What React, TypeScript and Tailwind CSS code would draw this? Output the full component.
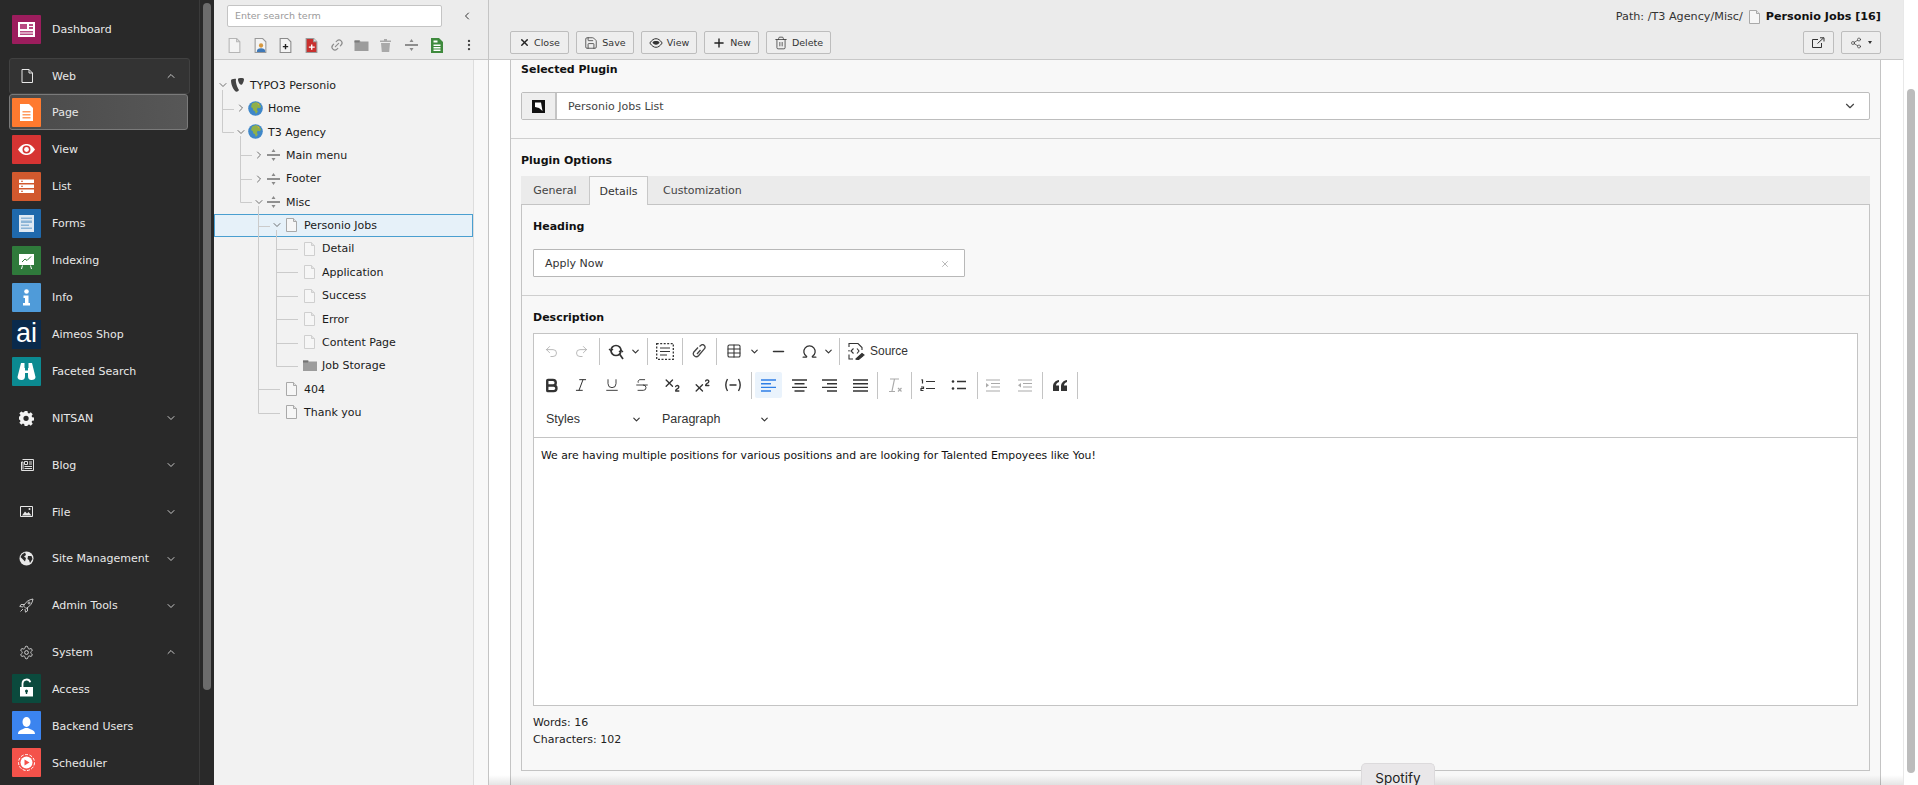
import { ReactNode } from "react";
import {
  Bold,
  ChevronDown,
  ChevronLeft,
  ChevronRight,
  ChevronUp,
  Italic,
  Link2,
  Minus,
  MoreVertical,
  Omega,
  Plus,
  Redo2,
  Save,
  Share2,
  Strikethrough,
  Subscript,
  Superscript,
  Table,
  Trash2,
  Underline,
  Undo2,
  X,
} from "lucide-react";

function Doc({ light }: { light?: boolean }) {
  const line = light ? "#cfcfcf" : "#a9a9a9";
  return (
    <svg width="11" height="14" viewBox="0 0 11 14" className="shrink-0">
      <path d="M.5.5h7l3 3v10H.5z" fill="#f6f6f6" stroke={line} />
      <path d="M7.5.5v3h3" fill="#e2e2e2" stroke={line} />
    </svg>
  );
}

function Divider() {
  return (
    <svg width="13" height="12" viewBox="0 0 13 12" className="shrink-0">
      <path d="M0 6h13" stroke="#666" strokeWidth="1.4" />
      <path d="M6.5 0l2 3h-4zM6.5 12l2-3h-4z" fill="#8a8a8a" />
    </svg>
  );
}

function Folder() {
  return (
    <svg width="14" height="11" viewBox="0 0 14 11" className="shrink-0">
      <path d="M0 0h5l1 1.5h8V11H0z" fill="#9c9c9c" />
      <path d="M0 1h5v1.5H0z" fill="#737373" />
    </svg>
  );
}

function Globe() {
  return (
    <svg width="15" height="15" viewBox="0 0 15 15" className="shrink-0">
      <circle cx="7.5" cy="7.5" r="7.3" fill="#3f87c9" />
      <path d="M4 2.5l4-1.4 3 1.2 2 3-1 2-2.5-.5-.6 2.2 1 1.6-2 2.4-1-2.7-1.7-1-.4-2-1.800-1.300z" fill="#8fb04a" />
      <path d="M9 2l2.500 1-1 1.500z" fill="#d4a63f" />
    </svg>
  );
}

function Typo3Logo() {
  return (
    <svg width="15" height="14" viewBox="0 0 15 14" className="shrink-0">
      <path d="M1 2.500C1 1.400 2.500.700 5 .700c.500 0 .900.100 1 .300C5.200 4 7.500 10 9 12c-.700.900-1.400 1.700-2.300 1.700C4 13.700 1 7 1 2.500z" fill="#444" />
      <path d="M8 .800c-.300 2.200 1.500 6 3 6 1.700 0 3-4.300 3-5.400C14 .300 12.800 0 11 0 9.500 0 8.300.200 8 .800z" fill="#444" />
    </svg>
  );
}

type TreeRow = {
  label: string;
  depth: number;
  icon: ReactNode;
  toggle?: "open" | "closed";
  selected?: boolean;
};

const treeRows: TreeRow[] = [
  { label: "TYPO3 Personio", depth: 0, icon: <Typo3Logo />, toggle: "open" },
  { label: "Home", depth: 1, icon: <Globe />, toggle: "closed" },
  { label: "T3 Agency", depth: 1, icon: <Globe />, toggle: "open" },
  { label: "Main menu", depth: 2, icon: <Divider />, toggle: "closed" },
  { label: "Footer", depth: 2, icon: <Divider />, toggle: "closed" },
  { label: "Misc", depth: 2, icon: <Divider />, toggle: "open" },
  { label: "Personio Jobs", depth: 3, icon: <Doc />, toggle: "open", selected: true },
  { label: "Detail", depth: 4, icon: <Doc light /> },
  { label: "Application", depth: 4, icon: <Doc light /> },
  { label: "Success", depth: 4, icon: <Doc light /> },
  { label: "Error", depth: 4, icon: <Doc light /> },
  { label: "Content Page", depth: 4, icon: <Doc light /> },
  { label: "Job Storage", depth: 4, icon: <Folder /> },
  { label: "404", depth: 3, icon: <Doc /> },
  { label: "Thank you", depth: 3, icon: <Doc /> },
];

function ModuleTile({ bg, children }: { bg: string; children: ReactNode }) {
  return (
    <span className={`flex h-[29px] w-[29px] shrink-0 items-center justify-center rounded-[1px] ${bg}`}>
      <svg width="29" height="29" viewBox="0 0 29 29" fill="#fff">
        {children}
      </svg>
    </span>
  );
}

function ModuleRow({ label, tile, active }: { label: string; tile: ReactNode; active?: boolean }) {
  return (
    <div className="relative flex h-[37px] items-center pl-[12px]">
      {active && (
        <div className="absolute left-[9px] top-0 h-[36px] w-[179px] rounded-[3px] border border-[#7a7a7a] bg-gradient-to-r from-[#4a4a4a] to-[#575757]" />
      )}
      <span className="relative">{tile}</span>
      <span className="relative ml-[11px] pt-[2px] text-[#e8e8e8]">{label}</span>
    </div>
  );
}

function GroupRow({ label, icon, open, boxed }: { label: string; icon: ReactNode; open?: boolean; boxed?: boolean }) {
  return (
    <div
      className={
        boxed
          ? "mx-[9px] mt-[14px] flex h-[36px] items-center rounded-[3px] border border-[#414141] bg-[#333333] pl-[2px]"
          : "mx-[9px] mt-[10.9px] flex h-[36px] items-center border border-transparent pl-[2px]"
      }
    >
      <span className="flex h-[29px] w-[29px] items-center justify-center">{icon}</span>
      <span className="ml-[11px] pt-[2px] text-[#e8e8e8]">{label}</span>
      <span className="ml-auto mr-[12px] text-[#c8c8c8]">
        {open ? <ChevronUp size={12} /> : <ChevronDown size={12} />}
      </span>
    </div>
  );
}

function Sidebar() {
  return (
    <aside className="flex h-full w-[214px] shrink-0 bg-[#292929] text-[11px]">
      <nav className="w-[199px] pt-[15px]">
        <div className="flex h-[29px] items-center pl-[12px]">
          <ModuleTile bg="bg-[#9c1d5d]">
            <path d="M6 7h17v15H6z" />
            <path d="M8 9h7v5H8zM17 9h4v2h-4zM17 12h4v2h-4zM8 16h13v1.500H8zM8 18.500h13V20H8z" fill="#b84a82" />
          </ModuleTile>
          <span className="ml-[11px] pt-[2px] text-[#e8e8e8]">Dashboard</span>
        </div>
        <GroupRow
          boxed
          open
          label="Web"
          icon={
            <svg width="12" height="14" viewBox="0 0 12 14" fill="none" stroke="#e8e8e8">
              <path d="M1 .500h7l3.500 3.500v9.500H1zM8 .500V4h3.500" />
            </svg>
          }
        />
        <ModuleRow
          active
          label="Page"
          tile={
            <ModuleTile bg="bg-[#ff7a2f]">
              <path d="M8 6h9l4 4v13H8z" />
              <path d="M10.500 13h8v1.600h-8zM10.500 16h8v1.600h-8zM10.500 19h8v1.600h-8z" fill="#ff9a60" />
            </ModuleTile>
          }
        />
        <ModuleRow
          label="View"
          tile={
            <ModuleTile bg="bg-[#d63433]">
              <path fillRule="evenodd" d="M6 14.500C9 10 12 9 14.500 9s5.500 1 8.500 5.500C20 19 17 20 14.500 20S9 19 6 14.500zm8.500-4a4 4 0 100 8 4 4 0 000-8z" />
              <circle cx="14.500" cy="14.500" r="2.400" />
            </ModuleTile>
          }
        />
        <ModuleRow
          label="List"
          tile={
            <ModuleTile bg="bg-[#d1592e]">
              <path d="M7 7.500h15v3.500H7zM7 12.500h15V16H7zM7 17.500h15V21H7z" />
              <path d="M9 8.700h2v1H9zM9 13.700h2v1H9zM9 18.700h2v1H9z" fill="#d1592e" />
            </ModuleTile>
          }
        />
        <ModuleRow
          label="Forms"
          tile={
            <ModuleTile bg="bg-[#1f69ac]">
              <path d="M7 6h15v17H7z" fill="#dfe9f3" />
              <path d="M9 8.500h11v1.500H9zM9 11.500h11V14H9zM9 15.500h8V17H9zM9 18.500h11V20H9z" fill="#8cb4d6" />
            </ModuleTile>
          }
        />
        <ModuleRow
          label="Indexing"
          tile={
            <ModuleTile bg="bg-[#2f7a3b]">
              <path d="M7 8h15v11H7zM10 19.500h1L10 23H9zM18 19.500h1l1 3.500h-1z" />
              <path d="M10 16l3-3 2 1.500 4-4" fill="none" stroke="#2f7a3b" strokeWidth="1" />
            </ModuleTile>
          }
        />
        <ModuleRow
          label="Info"
          tile={
            <ModuleTile bg="bg-[#4f9bd9]">
              <circle cx="14.500" cy="8.500" r="2.300" />
              <path d="M11.500 12.500h5V20h1.500v2.500h-7V20H13v-5h-1.500z" />
            </ModuleTile>
          }
        />
        <ModuleRow
          label="Aimeos Shop"
          tile={
            <span className="flex h-[29px] w-[29px] items-center justify-center bg-[#0a2a4c] pb-[3px] font-['Liberation_Sans',sans-serif] text-[27px] leading-none text-white">
              ai
            </span>
          }
        />
        <ModuleRow
          label="Faceted Search"
          tile={
            <ModuleTile bg="bg-[#0b8a91]">
              <path d="M9 6h3.500v5H13v2.500h3V11h.500V6H20l3.500 14c0 2-1.500 3-4 3s-3.500-1.500-3.500-4v-3h-3v3c0 2.500-1 4-3.500 4s-4-1-4-3z" />
            </ModuleTile>
          }
        />
        <div className="mt-[10px]">
          <GroupRowNoMargin
            label="NITSAN"
            icon={
              <svg width="15" height="15" viewBox="0 0 15 15" fill="#f2f2f2">
                <path
                  fillRule="evenodd"
                  d="M6 0h3l.400 2 1.400.600L12.500 1.400l2.100 2.100-1.200 1.700.600 1.400 2 .400v3l-2 .400-.600 1.400 1.200 1.700-2.100 2.100-1.700-1.200-1.400.600L9 16H6l-.400-2-1.400-.600-1.700 1.200L.400 12.500l1.200-1.700L1 9.400-1 9V6l2-.400.600-1.400L.400 2.500 2.500.400l1.700 1.200 1.400-.600zm1.500 5a2.800 2.800 0 100 5.600 2.800 2.800 0 000-5.600z"
                  transform="scale(.94)"
                />
              </svg>
            }
          />
        </div>
        <GroupRow
          label="Blog"
          icon={
            <svg width="14" height="12" viewBox="0 0 14 12" fill="none" stroke="#e0e0e0">
              <path d="M2.500 .500h11v11h-12V3h1.500v7.500" />
              <path d="M4.500 2.500h3v3h-3zM9 3h3M9 5h3M4.500 7.500h7.500M4.500 9.500h7.500" />
            </svg>
          }
        />
        <GroupRow
          label="File"
          icon={
            <svg width="13" height="11" viewBox="0 0 13 11" fill="none" stroke="#e8e8e8">
              <path d="M.500 .500h12v10H.500z" />
              <path d="M2 9.500l3-4 2 2 1.500-1.500 3 3.500z" fill="#e8e8e8" stroke="none" />
              <circle cx="9.500" cy="3" r="1" fill="#e8e8e8" stroke="none" />
            </svg>
          }
        />
        <GroupRow
          label="Site Management"
          icon={
            <svg width="15" height="15" viewBox="0 0 15 15">
              <circle cx="7.500" cy="7.500" r="7" fill="#e8e8e8" />
              <path d="M3 3.500L6 1.500 7 4 5 5.500l2 1.500-1 3.500L3 7.500 1.500 6zM9 5h3.500l1 3-2.500 4-1-3-1.500-1z" fill="#292929" />
            </svg>
          }
        />
        <GroupRow
          label="Admin Tools"
          icon={
            <svg width="15" height="15" viewBox="0 0 15 15" fill="none" stroke="#d8d8d8" strokeWidth=".9">
              <path d="M14 1C10 1.500 6.500 4 4.500 8l2.500 2.500C11 8.500 13.500 5 14 1z" />
              <path d="M5 6.500H2L.800 8.500 4 9M8.500 10v3l-2 1.200L6 11M4 11l-2.500 2.500" />
              <circle cx="10" cy="5" r="1" />
            </svg>
          }
        />
        <GroupRow
          open
          label="System"
          icon={
            <svg width="15" height="15" viewBox="0 0 24 24" fill="none" stroke="#d8d8d8" strokeWidth="1.600">
              <path d="M12.220 2h-.440a2 2 0 00-2 2v.180a2 2 0 01-1 1.730l-.430.250a2 2 0 01-2 0l-.150-.080a2 2 0 00-2.730.730l-.220.380a2 2 0 00.730 2.730l.150.100a2 2 0 011 1.720v.510a2 2 0 01-1 1.740l-.150.090a2 2 0 00-.730 2.730l.220.380a2 2 0 002.730.730l.150-.080a2 2 0 012 0l.430.250a2 2 0 011 1.730V20a2 2 0 002 2h.440a2 2 0 002-2v-.180a2 2 0 011-1.730l.430-.250a2 2 0 012 0l.150.080a2 2 0 002.730-.730l.220-.390a2 2 0 00-.730-2.730l-.150-.080a2 2 0 01-1-1.740v-.500a2 2 0 011-1.740l.150-.090a2 2 0 00.730-2.730l-.220-.380a2 2 0 00-2.730-.730l-.150.080a2 2 0 01-2 0l-.430-.250a2 2 0 01-1-1.730V4a2 2 0 00-2-2z" />
              <circle cx="12" cy="12" r="3" />
            </svg>
          }
        />
        <ModuleRow
          label="Access"
          tile={
            <ModuleTile bg="bg-[#0b4a3d]">
              <path d="M8 13h13v9.500H8z" />
              <path d="M10.500 13V9.500a4 4 0 017.800-1.200" fill="none" stroke="#fff" strokeWidth="1.800" />
              <circle cx="14.500" cy="17" r="1.500" fill="#0b4a3d" />
              <path d="M13.800 17h1.400v3h-1.400z" fill="#0b4a3d" />
            </ModuleTile>
          }
        />
        <ModuleRow
          label="Backend Users"
          tile={
            <ModuleTile bg="bg-[#3b84ef]">
              <ellipse cx="14.500" cy="11" rx="4" ry="5" />
              <path d="M6 23c0-3 2.500-4 5-5l2-1h3l2 1c2.500 1 5 2 5 5z" />
            </ModuleTile>
          }
        />
        <ModuleRow
          label="Scheduler"
          tile={
            <ModuleTile bg="bg-[#f4524a]">
              <circle cx="14.500" cy="14.500" r="6" />
              <circle cx="14.500" cy="14.500" r="8" fill="none" stroke="#fff" strokeWidth="1" strokeDasharray="3 1.500" />
              <path d="M12.500 11.500v6l5-3z" fill="#f4524a" />
            </ModuleTile>
          }
        />
      </nav>
      <div className="h-full w-[15px] border-l border-[#3a3a3a] pl-[3px] pt-[3px]">
        <div className="h-[687px] w-[8px] rounded-full bg-[#6c6c6c]" />
      </div>
    </aside>
  );
}

function GroupRowNoMargin({ label, icon }: { label: string; icon: ReactNode }) {
  return (
    <div className="mx-[9px] flex h-[36px] items-center border border-transparent pl-[2px]">
      <span className="flex h-[29px] w-[29px] items-center justify-center">{icon}</span>
      <span className="ml-[11px] pt-[2px] text-[#e8e8e8]">{label}</span>
      <span className="ml-auto mr-[12px] text-[#c8c8c8]">
        <ChevronDown size={12} />
      </span>
    </div>
  );
}

function TreeTools() {
  return (
    <div className="mt-[5px] flex h-[26px] items-center pl-[14px]">
      <span className="flex w-[25.500px] shrink-0">
        <svg width="13" height="15" viewBox="0 0 11 14">
          <path d="M.5.5h7l3 3v10H.5z" fill="#f4f4f4" stroke="#b5b5b5" />
          <path d="M7.5.5v3h3" fill="none" stroke="#b5b5b5" />
        </svg>
      </span>
      <span className="flex w-[25.500px] shrink-0">
        <svg width="13" height="15" viewBox="0 0 11 14">
          <path d="M.5.5h7l3 3v10H.5z" fill="#f4f4f4" stroke="#999" />
          <circle cx="6" cy="7" r="2" fill="#d6983f" />
          <path d="M2 13c0-2.500 1.500-3.500 4-3.500s4 1 4 3.500z" fill="#3f79b8" />
        </svg>
      </span>
      <span className="flex w-[25.500px] shrink-0">
        <svg width="13" height="15" viewBox="0 0 11 14">
          <path d="M.5.5h7l3 3v10H.5z" fill="#f4f4f4" stroke="#8a8a8a" />
          <path d="M3 8h5M5.500 5.500v5" stroke="#222" strokeWidth="1.300" />
        </svg>
      </span>
      <span className="flex w-[25.500px] shrink-0">
        <svg width="13" height="15" viewBox="0 0 11 14">
          <path d="M.5.5h7l3 3v10H.5z" fill="#c9302e" stroke="#999" />
          <path d="M7.5.5v3h3" fill="#eee" stroke="#999" />
          <path d="M3 8.500h5.500M5.700 6v5" stroke="#fff" strokeWidth="1.300" />
        </svg>
      </span>
      <span className="flex w-[24px] shrink-0 text-[#8d8d8d]">
        <Link2 size={14} className="-rotate-45" />
      </span>
      <span className="flex w-[25.500px] shrink-0 pt-[1px]">
        <svg width="15" height="11" viewBox="0 0 14 11">
          <path d="M0 0h5l1 1.500h8V11H0z" fill="#9c9c9c" />
          <path d="M0 1h5v1.500H0z" fill="#7a7a7a" />
        </svg>
      </span>
      <span className="flex w-[25.500px] shrink-0">
        <svg width="11" height="13" viewBox="0 0 11 13" fill="#a9a9a9">
          <path d="M0 1.500h4V0h3v1.500h4V3H0zM1 4h9l-.800 9H1.800z" />
        </svg>
      </span>
      <span className="flex w-[26px] shrink-0">
        <Divider />
      </span>
      <span className="flex w-[31px] shrink-0">
        <svg width="12" height="15" viewBox="0 0 12 15">
          <path d="M0 0h8l4 4v11H0z" fill="#3f8a3d" />
          <path d="M2.500 6.500h7v1.400h-7zM2.500 9h7v1.400h-7zM2.500 11.500h7v1.400h-7zM2.500 2.500h4v2h-4z" fill="#fff" />
        </svg>
      </span>
      <MoreVertical size={14} className="text-[#444]" />
    </div>
  );
}

function PageTree() {
  return (
    <div className="flex h-full w-[275px] shrink-0 flex-col border-r border-[#c4c4c4] bg-[#f2f2f2] text-[11px] text-[#1a1a1a]">
      <div className="h-[60px] shrink-0 border-b border-[#c8c8c8] bg-[#ececec] pt-[5px]">
        <div className="flex items-center pl-[13px]">
          <div className="flex h-[22px] w-[215px] items-center rounded-[2px] border border-[#c4c4c4] bg-white pl-[7px] pt-[1px] text-[9.500px] text-[#9a9a9a]">
            Enter search term
          </div>
          <ChevronLeft size={12} className="ml-[19px] text-[#333]" />
        </div>
        <TreeTools />
      </div>
      <div className="flex min-h-0 flex-1">
        <div className="relative w-[259px] pt-[13.300px]">
          {treeRows.map((r) => (
            <div
              key={r.label}
              className={
                r.selected
                  ? "relative flex h-[23.400px] items-center bg-[#e6f1f9] ring-1 ring-inset ring-[#4a9fd0]"
                  : "relative flex h-[23.400px] items-center"
              }
              style={{ paddingLeft: r.depth * 18 }}
            >
              <span className="flex w-[17px] shrink-0 justify-center text-[#444]">
                {r.toggle === "open" && <ChevronDown size={12} strokeWidth={1.5} />}
                {r.toggle === "closed" && <ChevronRight size={12} strokeWidth={1.5} />}
              </span>
              <span className="flex w-[13px] shrink-0 justify-center">{r.icon}</span>
              <span className="ml-[6px] whitespace-nowrap pt-[2px]">{r.label}</span>
            </div>
          ))}
          <svg className="pointer-events-none absolute left-0 top-0" width="259" height="420" fill="none" stroke="#cbcbcb">
            <path d="M8.500 30V72.500H20M8.500 49.500H20" />
            <path d="M26.500 76V142.500H38M26.500 95.500H38M26.500 119.500H38" />
            <path d="M44.500 146V353.500H66M44.500 329.500H66M44.500 166.500H56" />
            <path d="M62.500 170V306.500H84M62.500 189.500H84M62.500 212.500H84M62.500 236.500H84M62.500 259.500H84M62.500 283.500H84" />
          </svg>
        </div>
        <div className="flex-1 border-l border-[#dddddd] bg-[#f8f8f8]" />
      </div>
    </div>
  );
}

function DocButton({ icon, label, width }: { icon: ReactNode; label: string; width: string }) {
  return (
    <button className={`flex h-[23px] items-center justify-center gap-[4px] rounded-[2px] border border-[#bdbdbd] bg-[#eeeeee] text-[#333] ${width}`}>
      {icon}
      <span className="pt-[1px]">{label}</span>
    </button>
  );
}

function Sep({ className }: { className: string }) {
  return <span className={`h-[27px] w-px shrink-0 bg-[#c4c4c4] ${className}`} />;
}

function Tb({ className, children }: { className: string; children: ReactNode }) {
  return <span className={`flex shrink-0 items-center justify-center text-[#333] ${className}`}>{children}</span>;
}

function Caret({ className }: { className: string }) {
  return (
    <Tb className={`w-[12px] ${className}`}>
      <ChevronDown size={11} strokeWidth={2.5} />
    </Tb>
  );
}

function AlignLines({ d, color = "#333" }: { d: string; color?: string }) {
  return (
    <svg width="15" height="13" viewBox="0 0 15 13" fill="none" stroke={color} strokeWidth="1.400">
      <path d={d} />
    </svg>
  );
}

function EditorToolbar() {
  return (
    <div className="h-[104px] border-b border-[#c4c4c4] pl-[2px]">
      <div className="flex h-[34px] items-center">
        <Tb className="w-[30px]"><Undo2 size={15} strokeWidth={1.3} className="text-[#aaa]" /></Tb>
        <Tb className="w-[30px]"><Redo2 size={15} strokeWidth={1.3} className="text-[#aaa]" /></Tb>
        <Sep className="ml-[3px]" />
        <Tb className="ml-[3px] w-[26px]">
          <svg width="17" height="17" viewBox="0 0 17 17" fill="none" stroke="#333" strokeWidth="1.700">
            <circle cx="8" cy="7.500" r="5" />
            <path d="M11.500 11l3.500 5" />
            <path d="M1 6l2 2 2-2M11 9l2-2 2 2" strokeWidth="1.200" />
          </svg>
        </Tb>
        <Caret className="" />
        <Sep className="ml-[6px]" />
        <Tb className="ml-[2px] w-[30px]">
          <svg width="18" height="17" viewBox="0 0 18 17" fill="none" stroke="#333">
            <rect x=".700" y=".700" width="16.600" height="15.600" strokeDasharray="2 1.500" strokeWidth="1.300" />
            <path d="M4 5h10M4 8.500h10M4 12h7" strokeWidth="1.200" />
          </svg>
        </Tb>
        <Sep className="ml-[2px]" />
        <Tb className="ml-[1px] w-[30px]">
          <svg width="14" height="15" viewBox="0 0 14 15" fill="none" stroke="#444" strokeWidth="1.300">
            <path d="M7.500 2.500l1.500-1.300a2.500 2.500 0 013.500 3.500l-6 7a3 3 0 01-4.800-3.500L6 3.500" />
            <path d="M8.500 6l-3.500 4" />
          </svg>
        </Tb>
        <Sep className="ml-[2px]" />
        <Tb className="ml-[2px] w-[30px]"><Table size={16} strokeWidth={1.6} /></Tb>
        <Caret className="-ml-[1px]" />
        <Tb className="ml-[3px] w-[30px]"><Minus size={17} strokeWidth={2.2} /></Tb>
        <Tb className="ml-[1px] w-[30px]"><Omega size={17} strokeWidth={1.8} /></Tb>
        <Caret className="-ml-[2px]" />
        <Sep className="ml-[5px]" />
        <Tb className="ml-[5px] w-[24px]">
          <svg width="18" height="18" viewBox="0 0 18 18" fill="none" stroke="#333" strokeWidth="1.100">
            <path d="M1 5V1.500h9l4 4V8M1 12.500V17h4M1 8v1.500M5.500 6.500L3 9l2.500 2.500M9 6.500L11 9l-2 2.500" />
            <path d="M8 17l6-5.500 2 1.500-6 5z" fill="#333" />
          </svg>
        </Tb>
        <span className="ml-[1px] font-['Liberation_Sans',sans-serif] text-[12px] text-[#333]">Source</span>
      </div>
      <div className="flex h-[34px] items-center">
        <Tb className="w-[30.300px]"><Bold size={17} strokeWidth={3.4} /></Tb>
        <Tb className="w-[30.300px]"><Italic size={16} strokeWidth={1.5} /></Tb>
        <Tb className="w-[30.300px]"><Underline size={16} strokeWidth={1.4} /></Tb>
        <Tb className="w-[30.300px]"><Strikethrough size={16} strokeWidth={1.4} /></Tb>
        <Tb className="w-[30.300px]"><Subscript size={19} strokeWidth={1.7} /></Tb>
        <Tb className="w-[30.300px]"><Superscript size={19} strokeWidth={1.7} /></Tb>
        <Tb className="w-[30.300px]">
          <svg width="18" height="14" viewBox="0 0 18 14" fill="none" stroke="#333" strokeWidth="1.400">
            <path d="M3.500 1C1.500 4.500 1.500 9.500 3.500 13M14.500 1c2 3.500 2 8.500 0 12M5.500 7h7" />
          </svg>
        </Tb>
        <Sep className="ml-[3px]" />
        <Tb className="ml-[3px] h-[26px] w-[27px] rounded-[2px] bg-[#eaf3fc]">
          <AlignLines color="#2f7fe6" d="M0 1h15M0 4.700h10M0 8.400h15M0 12h10" />
        </Tb>
        <Tb className="ml-[2px] w-[30px]"><AlignLines d="M0 1h15M2.500 4.700h10M0 8.400h15M2.500 12h10" /></Tb>
        <Tb className="w-[30px]"><AlignLines d="M0 1h15M5 4.700h10M0 8.400h15M5 12h10" /></Tb>
        <Tb className="ml-[1px] w-[30px]"><AlignLines d="M0 1h15M0 4.700h15M0 8.400h15M0 12h15" /></Tb>
        <Sep className="ml-[2px]" />
        <Tb className="ml-[2px] w-[30px]">
          <svg width="16" height="15" viewBox="0 0 16 15" fill="none" stroke="#aaa" strokeWidth="1.200">
            <path d="M3 1h9M7.500 1L5 13M2 13.500h6M11 10l3.500 3.500M14.500 10L11 13.500" />
          </svg>
        </Tb>
        <Sep className="ml-[1px]" />
        <Tb className="ml-[1px] w-[30px]">
          <svg width="16" height="14" viewBox="0 0 16 14" fill="none" stroke="#333" strokeWidth="1.400">
            <path d="M6 3.500h9M6 10.500h9M2.500 1.500v4M1.500 2.200l1-.7M1 9h2.500v1.500H1V12.500h2.500" strokeWidth="1.200" />
          </svg>
        </Tb>
        <Tb className="ml-[1px] w-[30px]">
          <svg width="16" height="12" viewBox="0 0 16 12" stroke="#333" strokeWidth="1.400">
            <path d="M6 2.500h9M6 9.500h9" />
            <circle cx="2" cy="2.500" r="1.300" fill="#333" stroke="none" />
            <circle cx="2" cy="9.500" r="1.300" fill="#333" stroke="none" />
          </svg>
        </Tb>
        <Sep className="ml-[3px]" />
        <Tb className="w-[30px]">
          <svg width="16" height="13" viewBox="0 0 16 13" stroke="#aaa" strokeWidth="1.200" fill="none">
            <path d="M1 1h14M6 4.500h9M6 8h9M1 12h14" />
            <path d="M1 4l3 2.300-3 2.300z" fill="#aaa" stroke="none" />
          </svg>
        </Tb>
        <Tb className="ml-[2px] w-[30px]">
          <svg width="16" height="13" viewBox="0 0 16 13" stroke="#aaa" strokeWidth="1.200" fill="none">
            <path d="M1 1h14M6 4.500h9M6 8h9M1 12h14" />
            <path d="M4 4L1 6.300l3 2.300z" fill="#aaa" stroke="none" />
          </svg>
        </Tb>
        <Sep className="ml-[2px]" />
        <Tb className="ml-[2px] w-[30px]">
          <svg width="14" height="11" viewBox="0 0 14 11" fill="#333">
            <path d="M6 0C2.500 .500 0 3 0 6.500V11h6V5.500H3C3 3.500 4.500 2.500 6 2zM14 0c-3.500 .500-6 3-6 6.500V11h6V5.500h-3c0-2 1.500-3 3-3.500z" />
          </svg>
        </Tb>
        <Sep className="ml-[2px]" />
      </div>
      <div className="flex h-[34px] items-center pl-[10px] font-['Liberation_Sans',sans-serif] text-[12.500px] text-[#333]">
        <span className="flex w-[96px] items-center justify-between">
          Styles
          <ChevronDown size={11} strokeWidth={2.5} />
        </span>
        <span className="ml-[20px] flex w-[108px] items-center justify-between">
          Paragraph
          <ChevronDown size={11} strokeWidth={2.5} />
        </span>
      </div>
    </div>
  );
}

function MainPanel() {
  return (
    <main className="relative flex h-full min-w-0 flex-1 flex-col bg-white text-[11px] text-[#1a1a1a]">
      <header className="h-[60px] shrink-0 border-b border-[#c8c8c8] bg-[#ebebeb] pl-[21px] pr-[22px]">
        <div className="flex h-[31px] items-center justify-end pt-[3px] text-[11.200px] text-[#333]">
          <span>Path: /T3 Agency/Misc/</span>
          <span className="mx-[6px] flex"><Doc /></span>
          <b className="text-[#111]">Personio Jobs [16]</b>
        </div>
        <div className="flex items-center text-[9.500px]">
          <div className="flex gap-[7px]">
            <DocButton width="w-[59px]" icon={<X size={11} strokeWidth={3} className="text-[#222]" />} label="Close" />
            <DocButton width="w-[58px]" icon={<Save size={14} strokeWidth={1.3} />} label="Save" />
            <DocButton
              width="w-[56px]"
              icon={
                <svg width="14" height="10" viewBox="0 0 14 10" fill="#333" stroke="#333">
                  <path d="M.800 5C3 1.800 5 .700 7 .700s4 1.100 6.200 4.300C11 8.200 9 9.300 7 9.300S3 8.200.800 5z" fill="none" />
                  <path d="M3.500 4.200C4.500 2.500 9.500 2.500 10.500 4.200 10 7.500 4 7.500 3.500 4.200z" stroke="none" />
                </svg>
              }
              label="View"
            />
            <DocButton width="w-[55px]" icon={<Plus size={14} strokeWidth={2.4} className="text-[#222]" />} label="New" />
            <DocButton width="w-[65px]" icon={<Trash2 size={14} strokeWidth={1.3} />} label="Delete" />
          </div>
          <div className="ml-auto flex gap-[7px]">
            <button className="flex h-[23px] w-[31px] items-center justify-center rounded-[2px] border border-[#bdbdbd] bg-[#eeeeee] text-[#333]">
              <svg width="13" height="11" viewBox="0 0 13 11" fill="none" stroke="#333">
                <path d="M6 2.500H.500v8h9V6" />
                <path d="M5.500 6.500l6-5.500M8 .800h4v3.700" />
              </svg>
            </button>
            <button className="flex h-[23px] w-[40px] items-center justify-center gap-[6px] rounded-[2px] border border-[#bdbdbd] bg-[#eeeeee] text-[#333]">
              <Share2 size={12} strokeWidth={1.3} />
              <span className="h-0 w-0 border-x-[2.500px] border-t-[3px] border-x-transparent border-t-[#333]" />
            </button>
          </div>
        </div>
      </header>
      <div className="min-h-0 flex-1 pl-[21px] pr-[22px]">
        <div className="h-full border-x border-[#c4c4c4] bg-[#f8f8f8]">
          <div className="px-[10px]">
            <div className="flex h-[19px] items-center pt-[2px] font-bold text-[#111]">Selected Plugin</div>
            <div className="mt-[13px] flex h-[28px] rounded-[2px] border border-[#bdbdbd] bg-white">
              <span className="flex w-[35px] items-center justify-center border-r-2 border-[#c4c4c4] bg-[#eeeeee]">
                <svg width="13" height="13" viewBox="0 0 13 13">
                  <path d="M0 0h13v13H0z" fill="#111" />
                  <path d="M3 2.500h6L10.500 11 7 8 3 7z" fill="#fff" />
                </svg>
              </span>
              <span className="flex flex-1 items-center pl-[11px] pt-[2px] text-[#444]">Personio Jobs List</span>
              <ChevronDown size={14} className="mr-[12px] self-center text-[#444]" />
            </div>
          </div>
          <div className="mt-[18px] border-t border-[#cfcfcf]" />
          <div className="px-[10px]">
            <div className="mt-[12px] flex h-[18px] items-center pt-[2px] font-bold text-[#111]">Plugin Options</div>
            <div className="mt-[7px] flex h-[28px] bg-[#ebebeb] text-[#444]">
              <span className="flex w-[68px] items-center justify-center pt-[2px]">General</span>
              <span className="relative z-10 flex h-[29px] w-[59px] items-center justify-center border-x border-t border-[#c8c8c8] bg-[#f8f8f8] pt-[2px] text-[#333]">Details</span>
              <span className="ml-[15px] flex items-center pt-[2px]">Customization</span>
            </div>
            <div className="h-[567px] border border-[#c4c4c4]">
              <div className="px-[11px]">
                <div className="mt-[12px] flex h-[18px] items-center pt-[2px] font-bold text-[#111]">Heading</div>
                <div className="mt-[14px] flex h-[28px] w-[432px] items-center rounded-[1px] border border-[#b8b8b8] bg-white pl-[11px] pr-[14px] pt-[2px] text-[#333]">
                  Apply Now
                  <X size={10} className="ml-auto text-[#aaa]" />
                </div>
              </div>
              <div className="mt-[18px] border-t border-[#cfcfcf]" />
              <div className="px-[11px]">
                <div className="mt-[12px] flex h-[18px] items-center pt-[2px] font-bold text-[#111]">Description</div>
                <div className="mt-[7px] h-[373px] border border-[#c4c4c4] bg-white">
                  <EditorToolbar />
                  <p className="pl-[7px] pt-[10px] text-[10.850px] leading-[16px] text-[#111]">
                    We are having multiple positions for various positions and are looking for Talented Empoyees like You!
                  </p>
                </div>
                <div className="mt-[8px] leading-[17px] text-[#222]">
                  <div>Words: 16</div>
                  <div>Characters: 102</div>
                </div>
              </div>
            </div>
          </div>
        </div>
      </div>
      <div className="pointer-events-none absolute bottom-0 left-0 right-0 h-[10px] bg-gradient-to-b from-transparent to-black/10" />
      <div className="absolute bottom-0 left-[872px] h-[22px] w-[74px] rounded-t-[5px] border-x border-t border-[#dcdadc] bg-[#e9e7e9] pt-[4px] text-center font-['Inter',sans-serif] text-[13.500px] leading-[20px] text-[#222]">
        Spotify
      </div>
    </main>
  );
}

export default function App() {
  return (
    <div className="flex h-[785px] w-[1918px] overflow-hidden font-['DejaVu_Sans',Verdana,sans-serif]">
      <Sidebar />
      <PageTree />
      <MainPanel />
      <div className="h-full w-[15px] shrink-0 border-l border-[#e8e8e8] bg-white pl-[3px] pt-[89px]">
        <div className="h-[684px] w-[8px] rounded-full bg-[#bcbcbc]" />
      </div>
    </div>
  );
}
